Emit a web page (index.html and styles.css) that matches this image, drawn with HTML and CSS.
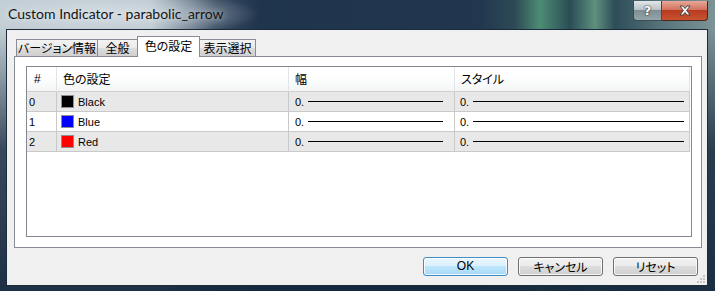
FILE: index.html
```html
<!DOCTYPE html>
<html>
  <head>
    <title>Custom Indicator - parabolic_arrow</title>
    <link rel="stylesheet" href="styles.css">
  </head>
  <body>
    <div class="window">

      <div class="titlebar">
        <span class="title">Custom Indicator - parabolic_arrow</span>
        <div class="caption">
          <div class="cap-btn help">?</div>
          <div class="cap-btn close">
            <svg width="12" height="11" viewBox="0 0 12 11">
              <path d="M1 1 H4 L6 3.6 L8 1 H11 L7.6 5.5 L11 10 H8 L6 7.4 L4 10 H1 L4.4 5.5 Z" fill="#fff" stroke="#3a3a3a" stroke-width="0.9" stroke-linejoin="round"/>
            </svg>
          </div>
        </div>
      </div>

      <div class="client">
        <div class="tabs">
          <div class="tab t1">バージョン情報</div>
          <div class="tab t2">全般</div>
          <div class="tab t3 active">色の設定</div>
          <div class="tab t4">表示選択</div>
        </div>

        <div class="panel">
          <div class="list">
            <div class="head">
              <div class="hcell">#</div>
              <div class="hcell">色の設定</div>
              <div class="hcell">幅</div>
              <div class="hcell">スタイル</div>
            </div>

            <div class="row grey">
              <div class="cell num">0</div>
              <div class="cell"><span class="sw black"></span>Black</div>
              <div class="cell width"><span>0.</span><span class="line"></span></div>
              <div class="cell style"><span>0.</span><span class="line"></span></div>
            </div>
            <div class="row">
              <div class="cell num">1</div>
              <div class="cell"><span class="sw blue"></span>Blue</div>
              <div class="cell width"><span>0.</span><span class="line"></span></div>
              <div class="cell style"><span>0.</span><span class="line"></span></div>
            </div>
            <div class="row grey">
              <div class="cell num">2</div>
              <div class="cell"><span class="sw red"></span>Red</div>
              <div class="cell width"><span>0.</span><span class="line"></span></div>
              <div class="cell style"><span>0.</span><span class="line"></span></div>
            </div>
          </div>
        </div>

        <div class="buttons">
          <div class="btn ok">OK</div>
          <div class="btn">キャンセル</div>
          <div class="btn">リセット</div>
        </div>

        <svg class="grip" width="10" height="10" viewBox="0 0 10 10">
          <rect x="7" y="1" width="2" height="2" fill="#c4c4c4"/>
          <rect x="4" y="4" width="2" height="2" fill="#c4c4c4"/>
          <rect x="7" y="4" width="2" height="2" fill="#c4c4c4"/>
          <rect x="1" y="7" width="2" height="2" fill="#c4c4c4"/>
          <rect x="4" y="7" width="2" height="2" fill="#c4c4c4"/>
          <rect x="7" y="7" width="2" height="2" fill="#c4c4c4"/>
        </svg>
      </div>

    </div>
  </body>
</html>
```

FILE: styles.css
```css
* {
  box-sizing: border-box;
}

body {
  margin: 0;
  width: 715px;
  height: 291px;
  overflow: hidden;
  font-family: "Noto Sans CJK JP", sans-serif;
  font-size: 12px;
  color: #000;
}

.window {
  width: 715px;
  height: 291px;
  display: flex;
  flex-direction: column;
  padding: 0 7px 5px 6px;
  background:
    radial-gradient(ellipse 150px 24px at 110px 14px, rgba(214, 222, 228, 0.9), rgba(214, 222, 228, 0)),
    linear-gradient(to bottom, rgba(22, 40, 62, 0) 0px, rgba(22, 40, 62, 0) 30px, rgba(22, 40, 62, 0.8) 150px, rgba(22, 40, 62, 0.95) 291px),
    linear-gradient(to right, #c0ccd3 0px, #b7c4cc 150px, #3a4d63 215px, #1f344d 260px, #22374f 480px, #2e4a55 515px, #4d8c74 540px, #2a4d55 570px, #5f907e 595px, #2d4d58 615px, #56727a 660px, #7c9496 715px);
}

/* title bar */
.titlebar {
  height: 29px;
  display: flex;
  justify-content: space-between;
  align-items: flex-start;
}

.title {
  font-family: Lato, sans-serif;
  font-size: 14px;
  color: #141414;
  padding: 5px 0 0 2px;
  text-shadow: 0 0 6px rgba(255, 255, 255, 0.7);
}

.caption {
  display: flex;
  height: 20px;
  margin-top: 1px;
}

.cap-btn {
  height: 20px;
  display: flex;
  align-items: center;
  justify-content: center;
}

.help {
  width: 29px;
  border: 1px solid #3d4b56;
  border-top: none;
  border-radius: 0 0 0 4px;
  background: linear-gradient(#e2e7e9, #b9c3c7 45%, #7d8e95 50%, #94a6aa 100%);
  font-family: "DejaVu Sans", sans-serif;
  font-weight: bold;
  font-size: 13px;
  color: #fff;
  text-shadow: 0 0 1px #222, 0 0 2px #333;
}

.close {
  width: 46px;
  border: 1px solid #4a2620;
  border-top: none;
  border-left: none;
  border-radius: 0 0 4px 0;
  background: linear-gradient(#e8a899, #d2735e 45%, #b83b22 50%, #c8532f 100%);
}

/* client area */
.client {
  flex: 1;
  display: flex;
  flex-direction: column;
  position: relative;
  background: #f0f0f0;
  border: 1px solid #1c2b3c;
}

.tabs {
  height: 26px;
  display: flex;
  align-items: flex-end;
  padding-left: 9px;
}

.tab {
  height: 17px;
  margin-left: -1px;
  border: 1px solid #898c95;
  border-bottom: none;
  background: linear-gradient(#f3f3f3 0%, #ebebeb 50%, #dddddd 50%, #cfcfcf 100%);
  font-size: 12px;
  line-height: 15px;
  text-align: center;
  font-feature-settings: "palt";
  white-space: nowrap;
}

.t1 { width: 82px; margin-left: 0; }
.t2 { width: 41px; }
.t3 { width: 63px; }
.t4 { width: 57px; }

.tab.active {
  height: 21px;
  margin-bottom: -1px;
  background: #fff;
  position: relative;
  z-index: 1;
  line-height: 17px;
}

.panel {
  height: 192px;
  margin: 0 5px 0 7px;
  border: 1px solid #898c95;
  background: #fff;
  padding: 9px 9px 10px 11px;
  display: flex;
}

/* list view */
.list {
  flex: 1;
  border: 1px solid #828790;
  background: #fff;
}

.head,
.row {
  display: grid;
  grid-template-columns: 30px 232px 166px 235px;
}

.hcell {
  height: 25px;
  padding-left: 6px;
  line-height: 24px;
  border-right: 1px solid #e3e4e6;
  border-bottom: 1px solid #cfcfcf;
  background: linear-gradient(#ffffff 0%, #ffffff 40%, #f4f5f6 100%);
  font-feature-settings: "palt";
}

.hcell:first-child {
  font-family: "Liberation Sans", sans-serif;
  padding-left: 7px;
}

.cell {
  height: 20px;
  display: flex;
  align-items: center;
  border-right: 1px solid #c9c9c9;
  border-bottom: 1px solid #c9c9c9;
  font-family: "Liberation Sans", sans-serif;
  font-size: 11px;
}

.row.grey .cell {
  background: #e8e8e8;
}

.num {
  padding-left: 2px;
}

.cell:nth-child(2) {
  padding-left: 4px;
}

.sw {
  width: 13px;
  height: 13px;
  margin-right: 4px;
  border: 1px solid #8e8e8e;
}

.sw.black { background: #000; }
.sw.blue { background: #0000ff; }
.sw.red { background: #ff0000; }

.width {
  padding: 0 11px 0 6px;
}

.style {
  padding: 0 5px 0 5px;
}

.line {
  flex: 1;
  height: 1px;
  margin-left: 4px;
  background: #000;
}

/* buttons */
.buttons {
  display: flex;
  justify-content: flex-end;
  gap: 10px;
  margin-top: 9px;
  padding-right: 9px;
}

.btn {
  width: 85px;
  height: 19px;
  border: 1px solid #707070;
  border-radius: 3px;
  background: linear-gradient(#f2f2f2 0%, #ebebeb 50%, #dddddd 50%, #cfcfcf 100%);
  box-shadow: inset 0 0 0 1px rgba(255, 255, 255, 0.8);
  text-align: center;
  line-height: 17px;
  font-size: 12px;
  font-feature-settings: "palt";
}

.btn.ok {
  border-color: #3c8dc8;
  background: linear-gradient(#eaf6fd 0%, #d9f0fc 50%, #bee6fd 50%, #a7d9f5 100%);
  font-family: "Liberation Sans", sans-serif;
}

.grip {
  position: absolute;
  right: 1px;
  bottom: 1px;
}
```
